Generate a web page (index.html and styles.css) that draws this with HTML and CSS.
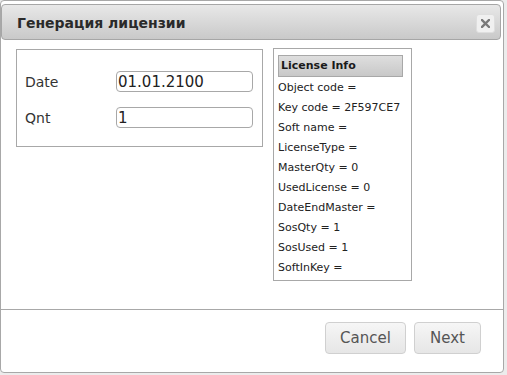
FILE: index.html
```html
<!DOCTYPE html>
<html lang="ru">
<head>
    <meta charset="UTF-8">
    <meta name="viewport" content="width=device-width, initial-scale=1.0">
    <title>Генерация лицензии</title>
    <link rel="stylesheet" href="styles.css">
</head>
<body>
    <div class="dialog">
        <div class="dialog-header">
            <span class="dialog-title">Генерация лицензии</span>
            <button class="close-btn" type="button" title="Close">
                <svg width="9" height="9" viewBox="0 0 9 9">
                    <path d="M1 1 L8 8 M8 1 L1 8" stroke="#7a7a7a" stroke-width="2.4" stroke-linecap="square"/>
                </svg>
            </button>
        </div>

        <div class="dialog-body">
            <div class="form-box">
                <label class="form-label" for="date">Date</label>
                <input class="form-input" type="text" id="date" value="01.01.2100">
                <label class="form-label" for="qnt">Qnt</label>
                <input class="form-input" type="text" id="qnt" value="1">
            </div>

            <div class="info-box">
                <div class="info-title">License Info</div>
                <div class="info-row">Object code =</div>
                <div class="info-row">Key code = 2F597CE7</div>
                <div class="info-row">Soft name =</div>
                <div class="info-row">LicenseType =</div>
                <div class="info-row">MasterQty = 0</div>
                <div class="info-row">UsedLicense = 0</div>
                <div class="info-row">DateEndMaster =</div>
                <div class="info-row">SosQty = 1</div>
                <div class="info-row">SosUsed = 1</div>
                <div class="info-row">SoftInKey =</div>
            </div>
        </div>

        <div class="dialog-footer">
            <button class="btn" type="button">Cancel</button>
            <button class="btn btn-next" type="button">Next</button>
        </div>
    </div>
</body>
</html>
```

FILE: styles.css
```css
/* Global Styles */
body {
    font-family: 'DejaVu Sans', Verdana, sans-serif;
    background-color: #ececec;
    margin: 0;
    padding: 0;
    color: #222;
}

.dialog {
    box-sizing: border-box;
    width: 504px;
    height: 373px;
    background-color: #fff;
    border: 1px solid #a8a8a8;
    border-radius: 4px;
    padding: 3px 2px 0 0;
    display: flex;
    flex-direction: column;
}

/* Header */
.dialog-header {
    height: 36px;
    flex-shrink: 0;
    box-sizing: border-box;
    border: 1px solid #a6a6a6;
    border-radius: 4px;
    background: linear-gradient(#e8e8e8, #c9c9c9);
    display: flex;
    align-items: center;
    justify-content: space-between;
    padding: 1px 5px 0 15px;
}

.dialog-title {
    font-size: 14px;
    font-weight: bold;
    color: #2a2a2a;
}

.close-btn {
    width: 19px;
    height: 19px;
    margin-top: 1px;
    padding: 0;
    border: 1px solid #dedede;
    border-radius: 3px;
    background-color: #f0f0f0;
    display: flex;
    align-items: center;
    justify-content: center;
    cursor: pointer;
}

/* Body */
.dialog-body {
    height: 269px;
    flex-shrink: 0;
    display: flex;
    align-items: flex-start;
    gap: 10px;
    padding: 8px 0 0 15px;
    box-sizing: border-box;
}

.form-box {
    width: 247px;
    height: 98px;
    box-sizing: border-box;
    margin-top: 1px;
    border: 1px solid #a8a8a8;
    padding: 21px 9px 0 8px;
    display: grid;
    grid-template-columns: 91px 1fr;
    align-content: start;
    row-gap: 15px;
    align-items: center;
}

.form-label {
    font-size: 14px;
    color: #333;
}

.form-input {
    height: 21px;
    box-sizing: border-box;
    border: 1px solid #a8a8a8;
    border-radius: 4px;
    padding: 0 1px;
    font-family: 'DejaVu Sans', Verdana, sans-serif;
    font-size: 15px;
    color: #222;
    width: 100%;
}

.info-box {
    width: 139px;
    height: 233px;
    box-sizing: border-box;
    border: 1px solid #a8a8a8;
    padding: 6px 8px 0 4px;
}

.info-title {
    height: 22px;
    box-sizing: border-box;
    border: 1px solid #a8a8a8;
    background: linear-gradient(#dedede, #c8c8c8);
    font-size: 11px;
    font-weight: bold;
    line-height: 20px;
    padding-left: 2px;
    color: #1a1a1a;
}

.info-row {
    height: 20px;
    line-height: 21px;
    font-size: 11px;
    color: #222;
    white-space: nowrap;
}

/* Footer */
.dialog-footer {
    border-top: 1px solid #a8a8a8;
    margin-right: -2px;
    display: flex;
    justify-content: flex-end;
    gap: 8px;
    padding: 12px 22px 0 0;
}

.btn {
    height: 32px;
    width: 81px;
    border: 1px solid #d0d0d0;
    border-radius: 4px;
    background: linear-gradient(#f6f6f6, #e6e6e6);
    font-family: 'DejaVu Sans', Verdana, sans-serif;
    font-size: 15px;
    color: #555;
    cursor: pointer;
}

.btn-next {
    width: 67px;
}
```
